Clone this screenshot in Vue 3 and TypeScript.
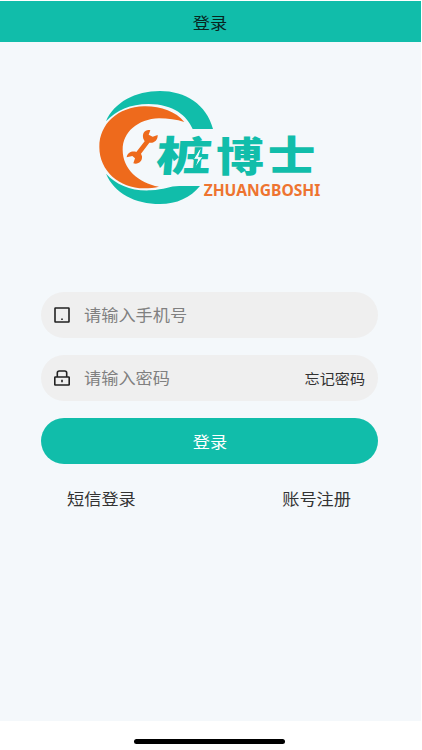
<script setup lang="ts">
import { ref } from 'vue'

const phone = ref('')
const password = ref('')
</script>

<template>
  <div class="screen">
    <header class="navbar"><span class="wide">登录</span></header>
    <main class="content">
      <svg class="logo" viewBox="0 0 720 405" role="img">
        <path class="green" d="M48 124C72 67 136 33 210 33C286 33 350 73 369 147H308C290 107 252 73 176 72C121 72 79 91 48 124Z" />
        <path class="green" d="M48 281C73 340 135 372 210 372C260 372 302 353 330 318H268C238 318 224 329 182 331C126 334 79 315 48 281Z" />
        <path class="orange" d="M283 126C257 94 211 78 162 79C84 81 28 132 28 201C28 273 88 325 162 325C178 325 195 323 207 320C144 308 98 266 98 209C98 157 143 117 207 115C234 115 260 119 283 126Z" />
        <path class="orange" d="M181 151C166 147 155 160 160 176L164 184L139 216C126 212 112 218 110 232L127 228L135 235L130 250C144 255 158 244 156 229L153 221L178 188C191 191 204 181 203 165L188 170L176 164Z" />
        <text class="name" transform="translate(196 273) skewX(-5) scale(1.36 1.02)" x="0" y="0">桩</text>
        <path class="bolt" d="M329 207L310 238H323L314 265L339 230H326L334 207Z" />
        <text class="name" transform="translate(379 272) scale(1.18 1)" x="0" y="0">博</text>
        <text class="name" transform="translate(533 270) scale(1.18 1)" x="0" y="0">士</text>
        <text class="latin" x="341" y="347" textLength="350" lengthAdjust="spacingAndGlyphs">ZHUANGBOSHI</text>
      </svg>

      <form class="form" @submit.prevent>
        <label class="field">
          <svg class="icon" viewBox="0 0 16 16">
            <rect x="1" y="1" width="14" height="14" rx=".4" />
            <path d="M7.2 12.3H8.8" />
          </svg>
          <input v-model="phone" class="wide" type="tel" placeholder="请输入手机号" />
        </label>
        <label class="field">
          <svg class="icon" viewBox="0 0 16 16">
            <rect x=".8" y="7" width="14.4" height="8" rx=".6" />
            <path d="M3.3 7V3Q3.3 1 5.3 1H10.7Q12.7 1 12.7 3V7M8 9.7V12.3" />
          </svg>
          <input v-model="password" class="wide" type="password" placeholder="请输入密码" />
          <a class="forgot">忘记密码</a>
        </label>
        <button class="submit" type="submit"><span class="wide">登录</span></button>
      </form>

      <nav class="links">
        <a class="wide start">短信登录</a>
        <a class="wide end">账号注册</a>
      </nav>
    </main>
    <footer class="home"><i class="indicator"></i></footer>
  </div>
</template>

<style>
body {
  margin: 0;
  background: #fff;
}
</style>

<style scoped>
.screen {
  box-sizing: border-box;
  width: 420.5px;
  height: 750px;
  padding-top: 1px;
  display: flex;
  flex-direction: column;
  overflow: hidden;
  font-family: "Noto Sans CJK SC", sans-serif;
  font-size: 16px;
  color: #333;
}
.wide {
  display: inline-block;
  transform: scaleX(1.075);
}
.navbar {
  flex: none;
  box-sizing: border-box;
  height: 41px;
  display: flex;
  align-items: center;
  justify-content: center;
  background: #11bdaa;
  color: #08251f;
  line-height: 24px;
}
.content {
  flex: none;
  display: flow-root;
  height: 679px;
  background: #f4f8fb;
}
.logo {
  display: block;
  width: 240px;
  height: 135px;
  margin: 38px 0 0 90px;
}
.green,
.name {
  fill: #11bdaa;
}
.orange {
  fill: #ee6a1c;
}
.name {
  font-size: 121px;
  font-weight: 900;
}
.bolt {
  fill: #f4f8fb;
  stroke: #11bdaa;
  stroke-width: 3;
}
.latin {
  font-family: "Noto Sans", sans-serif;
  font-size: 50px;
  font-weight: 700;
  fill: #ee7430;
}
.form {
  width: 337px;
  margin: 77px 0 0 41px;
  display: flex;
  flex-direction: column;
  gap: 17.5px;
}
.field {
  box-sizing: border-box;
  height: 45.7px;
  padding: 0 13px;
  display: flex;
  align-items: center;
  border-radius: 23px;
  background: #efefef;
}
.icon {
  flex: none;
  width: 16px;
  height: 16px;
  margin-right: 14px;
  fill: none;
  stroke: #222;
  stroke-width: 1.6;
}
input {
  flex: 1;
  min-width: 0;
  padding: 0 0 2px;
  border: 0;
  outline: 0;
  background: transparent;
  font: inherit;
  color: #333;
  transform-origin: left;
}
input::placeholder {
  color: #808080;
  opacity: 1;
}
.forgot {
  font-size: 14px;
  transform: scaleX(1.08);
  transform-origin: right;
}
.submit {
  height: 45.7px;
  padding: 0 0 0 1px;
  border: 0;
  border-radius: 23px;
  background: #11bdaa;
  color: #fff;
  font: inherit;
}
.links {
  display: flex;
  justify-content: space-between;
  padding: 22px 69px 0 67px;
  line-height: 24px;
}
.start {
  transform-origin: left;
}
.end {
  transform-origin: right;
}
.home {
  display: flex;
  justify-content: center;
  padding: 18px 1px 0 0;
}
.indicator {
  width: 151px;
  height: 5px;
  border-radius: 3px;
  background: #000;
}
</style>
